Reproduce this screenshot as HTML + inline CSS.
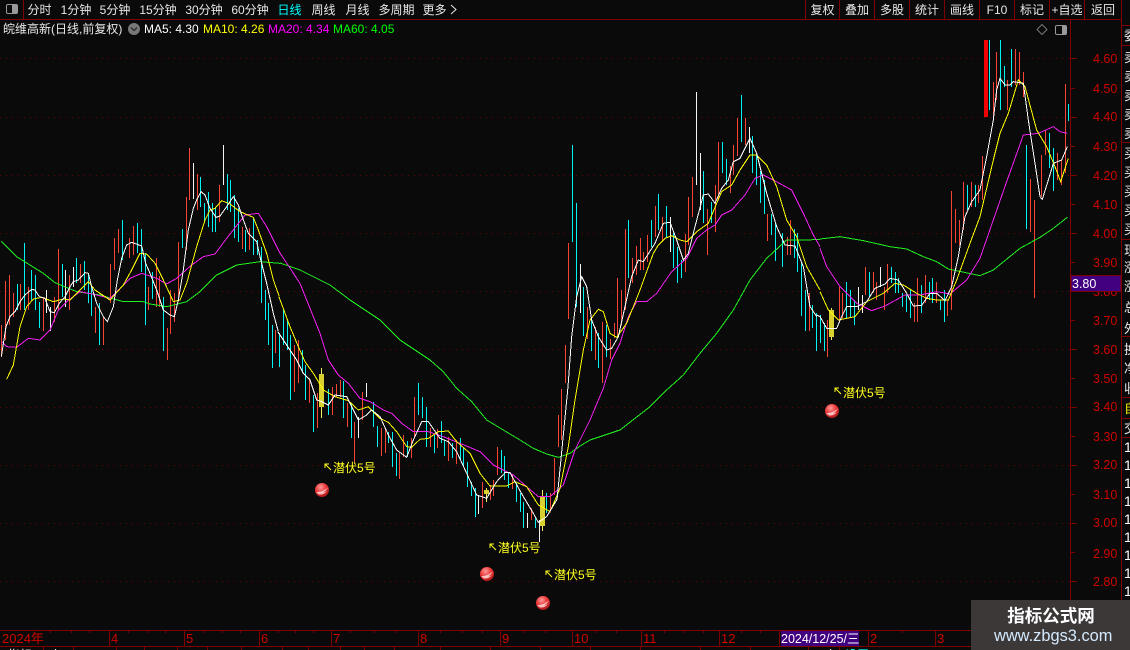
<!DOCTYPE html>
<html><head><meta charset="utf-8"><style>
html,body{margin:0;padding:0;background:#0a0a0a;width:1130px;height:650px;overflow:hidden}
svg{display:block;position:absolute;left:0;top:0}
text{font-family:"Liberation Sans","WenQuanYi Zen Hei","Noto Sans CJK SC",sans-serif;font-size:12px}
.l{fill:none;stroke-width:1;vector-effect:non-scaling-stroke;shape-rendering:crispEdges}
.l polyline{fill:none;vector-effect:non-scaling-stroke}
.t{fill:#e8e8e8;text-anchor:middle}
.y{fill:#d00000;font-size:12.5px}
.x{fill:#d00000;font-size:13px}
.s{fill:#e8e8e8;font-size:13px}
.h{fill:#ffff20;font-size:12px}
</style></head><body>
<svg width="1130" height="650" viewBox="0 0 1130 650" xmlns="http://www.w3.org/2000/svg">
<defs>
<radialGradient id="b" cx="40%" cy="30%" r="75%"><stop offset="0" stop-color="#ff9a9a"/><stop offset=".55" stop-color="#e83030"/><stop offset="1" stop-color="#a01818"/></radialGradient>
<g id="ball"><circle r="7" fill="url(#b)"/><path d="M-6 2 Q0 2.5 6 -2.5 Q4 1 1 2.5 Q3 2.5 5 1 Q2 5 -3 4.5 Z" fill="#ffdada" opacity=".85"/></g>
</defs>
<rect width="1130" height="650" fill="#0a0a0a"/>
<!-- grid -->
<path d="M0 58.5H1070M0 117.5H1070M0 175.5H1070M0 233.5H1070M0 291.5H1070M0 349.5H1070M0 407.5H1070M0 465.5H1070M0 523.5H1070M0 581.5H1070" stroke="#6a0000" stroke-width="1" stroke-dasharray="1 5" fill="none"/>
<!-- candles red -->
<path fill="none" stroke="#f84434" stroke-width="1" d="M1.5 325V357M5.5 281V340M9.5 275V325M13.5 293V317M20.5 284V310M28.5 287V310M43.5 297V331M54.5 297V322M58.5 249V310M69.5 275V310M80.5 264V283M95.5 307V333M103.5 317V345M110.5 264V303M114.5 238V270M118.5 229V253M129.5 238V258M133.5 226V255M148.5 287V310M156.5 258V307M159.5 276V307M167.5 328V360M170.5 290V334M174.5 293V322M178.5 242V297M186.5 197V250M189.5 148V200M197.5 174V210M219.5 185V222M242.5 227V249M249.5 228V250M275.5 330V353
M294.5 345V392M298.5 340V383M309.5 378V403M317.5 393V428M332.5 387V415M336.5 384V397M340.5 380V397M347.5 403V427M354.5 422V463M362.5 392V420M381.5 428V456M385.5 428V453M399.5 453V479M403.5 435V457M411.5 438V458M414.5 397V438M430.5 428V447M437.5 429V448M448.5 437V461M456.5 440V464M482.5 482V508M490.5 485V500M493.5 480V496M497.5 447V475M512.5 475V489M531.5 508V520M550.5 493V510M554.5 458V495M558.5 415V447M561.5 389V440M565.5 345V383
M568.5 243V319M587.5 307V339M595.5 327V360M602.5 322V383M610.5 339V359M614.5 323V338M617.5 278V335M621.5 290V325M625.5 229V310M632.5 258V283M636.5 246V275M640.5 238V270M643.5 252V270M647.5 235V262M655.5 206V237M662.5 217V242M685.5 234V272M688.5 197V245M692.5 177V217M707.5 209V255M715.5 185V232M718.5 142V200M730.5 166V193M733.5 145V175M737.5 118V156M745.5 118V145M767.5 214V241M787.5 237V255M790.5 220V255
M809.5 293V331M827.5 320V357M839.5 287V322M842.5 293V318M865.5 267V295M873.5 272V293M876.5 282V300M884.5 287V310M887.5 264V293M914.5 303V322M917.5 278V322M925.5 275V303M936.5 282V303M947.5 300V316M951.5 191V310M955.5 209V243M959.5 220V245M963.5 182V230M971.5 182V207M978.5 185V203M982.5 156V200M993.5 82V117M996.5 52V100M1007.5 80V110M1015.5 49V85M1019.5 52V85M1023.5 72V97M1030.5 179V232M1034.5 200V298M1041.5 155V197M1045.5 130V155M1057.5 153V180M1061.5 160V185M1065.5 84V173"/>
<!-- candles cyan -->
<path fill="none" stroke="#00f4f4" stroke-width="1" d="M17.5 284V310M24.5 243V310M31.5 270V300M35.5 275V310M39.5 302V328M62.5 264V297M76.5 258V283M84.5 261V290M88.5 273V303M91.5 287V316M99.5 303V345M122.5 220V260M137.5 223V253M141.5 229V272M145.5 253V325M152.5 272V299M163.5 297V351M182.5 229V248M200.5 177V207M204.5 203V223M208.5 192V227M212.5 203V232M215.5 207V232M227.5 174V210M230.5 180V212M234.5 195V238M238.5 208V242M245.5 230V252M253.5 217V255M257.5 240V255M261.5 247V303M265.5 290V320M268.5 303V345M272.5 325V368M279.5 333V367
M283.5 310V345M287.5 320V350M290.5 335V400M302.5 350V373M305.5 365V400M313.5 395V432M328.5 389V415M343.5 381V418M351.5 403V438M373.5 402V427M377.5 426V447M388.5 432V443M392.5 432V467M396.5 453V476M407.5 441V457M418.5 383V415M422.5 397V418M426.5 407V447M434.5 435V453M441.5 421V443M444.5 440V456M452.5 443V458M460.5 438V460M463.5 448V467M467.5 462V487M471.5 482V496M475.5 488V517M501.5 450V473M504.5 456V480M508.5 473V488M516.5 483V502M520.5 493V512M523.5 502V528M535.5 517V528M546.5 493V513
M572.5 145V242M576.5 203V307M583.5 287V336M591.5 317V351M598.5 333V368M606.5 325V357M628.5 220V278M651.5 220V247M658.5 194V230M666.5 206V238M673.5 233V268M677.5 247V283M681.5 260V278M703.5 171V223M711.5 202V223M722.5 142V173M726.5 159V185M741.5 95V142M752.5 136V173M756.5 153V185M760.5 171V203M764.5 180V214M771.5 214V235M775.5 223V261M782.5 233V267M794.5 229V258M797.5 233V272
M801.5 263V316M805.5 290V331M812.5 305V328M816.5 313V351M820.5 315V343M824.5 323V351M846.5 282V319M850.5 290V317M854.5 300V325M869.5 272V297M891.5 267V283M895.5 272V293M898.5 278V293M902.5 293V307M906.5 295V312M910.5 290V318M921.5 285V313M929.5 282V300M932.5 278V303M940.5 300V310M944.5 290V322M967.5 185V210M975.5 185V207M989.5 40V110M1000.5 40V110M1004.5 66V87M1011.5 49V87M1026.5 145V229M1049.5 133V168M1053.5 148V191M1068.5 104V121"/>
<!-- candles white -->
<path fill="none" stroke="#f4f4f4" stroke-width="1" d="M46.5 290V313M50.5 307V331M65.5 270V307M73.5 267V287M193.5 163V199M223.5 145V185M358.5 417V438M366.5 383V397M478.5 495V514M527.5 513V528M539.5 520V542M580.5 264V313M670.5 217V252M696.5 92V185M700.5 153V210M749.5 127V153M858.5 287V310M862.5 295V313M880.5 267V287"/>
<!-- thick red -->
<rect x="984" y="40" width="4" height="77" fill="#f00000"/>
<!-- yellow signal candles -->
<path fill="none" stroke="#f4f060" stroke-width="1" d="M321.5 368V418M486.5 488V502M542.5 490V531M831.5 308V340"/>
<g fill="#d8d030"><rect x="319" y="374" width="5" height="33"/><rect x="484" y="490" width="5" height="4"/><rect x="540" y="496" width="5" height="30"/><rect x="829" y="310" width="5" height="27"/></g>
<!-- MA60 green -->
<g class="l" stroke="#20f020">
<polyline transform="translate(0,140) scale(.33333)" points="4,304 25,325 50,350 85,372 130,400 165,428 230,455 300,465 370,485 430,485 450,492 500,500 560,485 600,455 650,405 710,375 780,365 840,370"/>
<polyline transform="translate(280,360) scale(.33333)" points="0,-291 60,-270 150,-225 210,-180 300,-120 360,-60 450,0 490,35 530,85 575,125 620,180 670,210 720,240 760,265 800,282 835,292 870,280 900,258"/>
<polyline transform="translate(540,90) scale(.33333)" points="120,1068 150,1050 240,1020 330,950 380,900 430,855 480,790 530,730 580,660 630,570 680,505 740,450 800,450 840,448"/>
<polyline transform="translate(780,30) scale(.33333)" points="120,627 180,620 250,632 330,650 380,657 430,680 470,695 505,717 600,737 640,720 720,655 780,622 820,595 862,562"/>
</g>
<!-- MA20 magenta -->
<g class="l" stroke="#f020f0">
<polyline transform="translate(0,140) scale(.33333)" points="5,605 20,620 50,622 85,595 120,600 150,570 175,510 200,485 240,455 290,465 330,475 365,440 390,415 425,400 470,415 500,432 530,415 575,375 610,350 645,342 680,295 735,225 775,220 800,260 840,340"/>
<polyline transform="translate(280,360) scale(.33333)" points="0,-321 60,-230 120,-80 145,0 175,45 205,70 240,115 270,125 310,150 335,160 365,190 400,215 445,215 490,230 540,250 600,275 640,315 700,345 740,380 775,410 810,410 850,375 885,270 900,240"/>
<polyline transform="translate(540,90) scale(.33333)" points="120,1050 150,990 190,895 215,810 240,760 265,680 290,635 320,635 350,610 395,545 440,505 470,445 500,420 525,405 545,375 575,360 615,315 645,265 670,255 700,270 755,300 790,370 820,435 840,470"/>
<polyline transform="translate(780,30) scale(.33333)" points="120,655 140,710 180,770 230,820 275,842 315,828 375,795 420,795 470,785 510,792 560,750 600,685 640,570 680,455 730,315 775,310 820,290 840,305 862,310"/>
</g>
<!-- MA10 yellow -->
<g class="l" stroke="#ffff00">
<polyline transform="translate(0,140) scale(.33333)" points="20,718 40,675 60,560 80,500 100,477 125,472 160,485 190,477 210,480 240,450 265,425 285,450 330,480 370,435 395,390 420,340 440,342 465,370 490,420 520,485 540,480 560,430 590,320 615,240 630,210 645,205 665,182 690,192 720,215 760,232 775,270 800,340 820,420 838,470"/>
<polyline transform="translate(280,360) scale(.33333)" points="-3,-189 30,-100 55,-40 75,5 100,40 130,90 165,110 205,122 235,150 265,140 300,175 325,187 350,215 380,260 395,262 420,238 445,235 475,215 505,213 530,245 570,280 600,340 630,378 680,378 705,365 740,380 775,435 810,455 840,385 865,260 885,120"/>
<polyline transform="translate(540,90) scale(.33333)" points="105,930 130,780 150,690 175,658 190,665 210,730 230,742 260,700 300,600 340,490 355,465 375,445 395,437 420,450 440,455 470,425 505,400 530,340 545,305 575,285 600,240 630,195 650,195 680,225 710,290 740,390 770,440 800,530 840,600"/>
<polyline transform="translate(780,30) scale(.33333)" points="120,785 145,840 175,870 225,860 260,815 310,790 345,760 370,765 410,790 440,805 470,810 505,810 530,750 570,640 600,560 640,390 660,310 685,250 715,150 735,170 770,300 800,350 825,410 842,455 865,385"/>
</g>
<!-- MA5 white -->
<g class="l" stroke="#ffffff">
<polyline transform="translate(0,140) scale(.33333)" points="4,650 18,560 30,530 45,515 60,485 75,465 95,448 105,450 118,470 135,475 150,515 163,518 178,490 195,470 210,440 220,425 235,420 255,398 265,400 275,440 290,490 310,530 322,545 340,500 352,420 365,355 380,315 395,307 425,318 437,370 450,400 470,450 490,510 510,525 523,530 535,480 550,390 565,270 580,205 590,180 603,155 615,165 630,205 648,232 660,228 680,200 700,170 715,195 730,240 745,280 770,305 780,350 800,430 820,520 835,575"/>
<polyline transform="translate(280,360) scale(.33333)" points="-6,-84 50,0 70,40 90,60 110,120 125,125 145,135 165,105 200,110 235,180 260,165 275,150 300,170 325,225 350,270 380,292 400,240 425,185 445,185 480,235 505,245 530,275 560,340 590,405 620,415 650,365 675,338 690,338 730,410 760,460 775,487 800,470 830,420"/>
<polyline transform="translate(540,90) scale(.33333)" points="51,1230 84,890 95,740 110,620 125,560 140,590 155,690 175,740 200,780 215,775 235,740 255,650 275,560 295,510 310,515 345,460 370,400 390,397 410,450 430,510 445,490 465,410 490,315 505,312 525,340 545,295 565,270 580,215 600,205 630,145 650,190 680,310 710,410 735,465 765,468 790,530 810,650 830,680"/>
<polyline transform="translate(780,30) scale(.33333)" points="110,855 120,860 140,895 170,895 185,860 200,830 230,830 260,815 285,775 315,762 330,745 355,750 380,790 400,828 425,826 450,790 470,790 495,812 515,770 535,680 555,560 575,515 600,480 620,380 640,270 650,180 660,145 675,165 690,165 700,155 730,160 745,270 765,400 780,500 787,508 805,450 820,400 845,390 862,350"/>
</g>
<!-- signals -->
<use href="#ball" x="322" y="490"/><use href="#ball" x="487" y="574"/><use href="#ball" x="543" y="603"/><use href="#ball" x="832" y="411"/>
<g stroke="#ffff20" fill="none" stroke-width="1"><path d="M331 470L325.5 464.5M325 468V464H329"/><path d="M496 550L490.5 544.5M490 548V544H494"/><path d="M552 577L546.5 571.5M546 575V571H550"/><path d="M841 394L835.5 388.5M835 392V388H839"/></g>
<text class="h" x="333" y="472">潜伏5号</text>
<text class="h" x="498" y="552">潜伏5号</text>
<text class="h" x="554" y="579">潜伏5号</text>
<text class="h" x="843" y="397">潜伏5号</text>
<!-- top bar -->
<rect width="1130" height="19" fill="#0a0a0a"/>
<path d="M0 19.5H1122M23.5 0V19M805.5 0V19M839.5 0V19M874.5 0V19M909.5 0V19M944.5 0V19M979.5 0V19M1014.5 0V19M1049.5 0V19M1084.5 0V19M1121.5 0V650M1070.5 20V630" stroke="#800000" stroke-width="1" fill="none"/>
<g fill="none" stroke="#999"><rect x="6.5" y="4.5" width="11" height="9" rx="1.5"/></g><rect x="12" y="5" width="5" height="8" fill="#999"/>
<g class="t">
<text x="39.5" y="14" class="t">分时</text><text x="76" y="14" class="t">1分钟</text><text x="115" y="14" class="t">5分钟</text><text x="158" y="14" class="t">15分钟</text><text x="204" y="14" class="t">30分钟</text><text x="250" y="14" class="t">60分钟</text>
<text x="289.5" y="14" class="t" style="fill:#00ffff">日线</text><text x="323.5" y="14" class="t">周线</text><text x="357.5" y="14" class="t">月线</text><text x="396.5" y="14" class="t">多周期</text><text x="434.5" y="14" class="t">更多</text>
<text x="822.5" y="14" class="t">复权</text><text x="857" y="14" class="t">叠加</text><text x="892" y="14" class="t">多股</text><text x="927" y="14" class="t">统计</text><text x="962" y="14" class="t">画线</text><text x="997" y="14" class="t">F10</text><text x="1032" y="14" class="t">标记</text><text x="1067" y="14" class="t">+自选</text><text x="1103" y="14" class="t">返回</text>
</g>
<path d="M451 5L456 9.5L451 14" stroke="#e8e8e8" fill="none"/>
<!-- info line -->
<text x="3" y="33" fill="#e8e8e8">皖维高新(日线,前复权)</text>
<circle cx="134" cy="29" r="6" fill="#777"/><path d="M131 27.5L134 30.5L137 27.5" stroke="#222" fill="none" stroke-width="1.2"/>
<text x="144" y="33" fill="#fff">MA5: 4.30</text>
<text x="203" y="33" fill="#ffff00">MA10: 4.26</text>
<text x="268" y="33" fill="#ff00ff">MA20: 4.34</text>
<text x="333" y="33" fill="#00ff00">MA60: 4.05</text>
<path d="M1042 24.5L1047 29.5L1042 34.5L1037 29.5Z" stroke="#777" fill="none"/>
<rect x="1055.5" y="25.5" width="11" height="9" rx="1.5" stroke="#999" fill="none"/><rect x="1062" y="26" width="4" height="8" fill="#999"/>
<!-- y axis -->
<path stroke="#800000" fill="none" d="M1071 58.5H1077M1071 88.5H1075M1071 117.5H1077M1071 146.5H1075M1071 175.5H1077M1071 204.5H1075M1071 233.5H1077M1071 262.5H1075M1071 291.5H1077M1071 320.5H1075M1071 349.5H1077M1071 378.5H1075M1071 407.5H1077M1071 436.5H1075M1071 465.5H1077M1071 494.5H1075M1071 523.5H1077M1071 552.5H1075M1071 581.5H1077"/>
<g class="y">
<text class="y" x="1093" y="63">4.60</text><text class="y" x="1093" y="93">4.50</text><text class="y" x="1093" y="121">4.40</text><text class="y" x="1093" y="151">4.30</text><text class="y" x="1093" y="180">4.20</text><text class="y" x="1093" y="209">4.10</text><text class="y" x="1093" y="238">4.00</text><text class="y" x="1093" y="267">3.90</text><text class="y" x="1093" y="296">3.80</text><text class="y" x="1093" y="325">3.70</text><text class="y" x="1093" y="354">3.60</text><text class="y" x="1093" y="383">3.50</text><text class="y" x="1093" y="411">3.40</text><text class="y" x="1093" y="441">3.30</text><text class="y" x="1093" y="469">3.20</text><text class="y" x="1093" y="499">3.10</text><text class="y" x="1093" y="527">3.00</text><text class="y" x="1093" y="558">2.90</text><text class="y" x="1093" y="586">2.80</text>
</g>
<rect x="1071" y="275.5" width="50" height="16" fill="#400080" stroke="#800000"/>
<text x="1072" y="288" fill="#fff" style="font-size:12.5px">3.80</text>
<!-- sidebar -->
<path stroke="#800000" fill="none" d="M1122 25.5H1130M1122 45.5H1130M1122 142.5H1130M1122 239.5H1130M1122 336.5H1130M1122 397.5H1130M1122 418.5H1130M1122 437.5H1130"/>
<g>
<text class="s" x="1124" y="40">委</text>
<text class="s" x="1124" y="62">卖</text><text class="s" x="1124" y="81">卖</text><text class="s" x="1124" y="100">卖</text><text class="s" x="1124" y="119">卖</text><text class="s" x="1124" y="138">卖</text>
<text class="s" x="1124" y="158">买</text><text class="s" x="1124" y="177">买</text><text class="s" x="1124" y="196">买</text><text class="s" x="1124" y="215">买</text><text class="s" x="1124" y="234">买</text>
<text class="s" x="1124" y="255">现</text><text class="s" x="1124" y="272">涨</text><text class="s" x="1124" y="291">涨</text><text class="s" x="1124" y="312">总</text><text class="s" x="1124" y="333">外</text>
<text class="s" x="1124" y="354">换</text><text class="s" x="1124" y="373">净</text><text class="s" x="1124" y="393">收</text>
<text class="s" x="1124" y="413" style="fill:#e8e800">自</text><text class="s" x="1124" y="433">交</text>
<text x="1124" y="452" fill="#fff" style="font-size:14px">1</text><text x="1124" y="470" fill="#fff" style="font-size:14px">1</text><text x="1124" y="488" fill="#fff" style="font-size:14px">1</text><text x="1124" y="506" fill="#fff" style="font-size:14px">1</text><text x="1124" y="524" fill="#fff" style="font-size:14px">1</text><text x="1124" y="542" fill="#fff" style="font-size:14px">1</text><text x="1124" y="560" fill="#fff" style="font-size:14px">1</text><text x="1124" y="578" fill="#fff" style="font-size:14px">1</text><text x="1124" y="596" fill="#fff" style="font-size:14px">1</text>
</g>
<!-- bottom axis -->
<path stroke="#800000" fill="none" d="M0 630.5H1070M0 646.5H1130M109.5 631V646M184.5 631V646M259.5 631V646M331.5 631V646M418.5 631V646M500.5 631V646M572.5 631V646M641.5 631V646M719.5 631V646M779.5 631V646M868.5 631V646M935.5 631V646
M50.5 631V633M71.5 631V633M89.5 631V633M128.5 631V633M148.5 631V633M165.5 631V633M203.5 631V633M222.5 631V633M240.5 631V633M278.5 631V633M295.5 631V633M313.5 631V633M350.5 631V633M374.5 631V633M396.5 631V633M440.5 631V633M462.5 631V633M482.5 631V633M523.5 631V633M545.5 631V633M595.5 631V633M616.5 631V633M664.5 631V633M684.5 631V633M703.5 631V633M741.5 631V633M760.5 631V633M902.5 631V633
M43.5 647V650M73.5 647V650M116.5 647V650M144.5 647V650M177.5 647V650M207.5 647V650M241.5 647V650M282.5 647V650M308.5 647V650M340.5 647V650M364.5 647V650M394.5 647V650M440.5 647V650M490.5 647V650M540.5 647V650M590.5 647V650M640.5 647V650M700.5 647V650M750.5 647V650M808.5 647V650M839.5 647V650"/>
<g class="x">
<text class="x" x="2" y="643">2024年</text><text class="x" x="111" y="643">4</text><text class="x" x="186" y="643">5</text><text class="x" x="261" y="643">6</text><text class="x" x="333" y="643">7</text><text class="x" x="420" y="643">8</text><text class="x" x="502" y="643">9</text><text class="x" x="574" y="643">10</text><text class="x" x="643" y="643">11</text><text class="x" x="721" y="643">12</text><text class="x" x="870" y="643">2</text><text class="x" x="937" y="643">3</text>
</g>
<rect x="781" y="631" width="78" height="15" fill="#400080"/>
<text x="781" y="643" fill="#fff" style="font-size:12.5px">2024/12/25/三</text>
<text x="8" y="659" fill="#fff">指标</text><text x="50" y="659" fill="#fff">上</text><text x="825" y="659" fill="#fff">上</text><text x="845" y="659" fill="#00ffff">设置</text>
<!-- watermark -->
<rect x="971" y="600" width="159" height="50" fill="#3c3838"/>
<text x="1051" y="622" text-anchor="middle" fill="#fff" style="font-size:17.5px;font-weight:bold">指标公式网</text>
<text x="994" y="641" fill="#d4eaff" style="font-size:16.4px">www.zbgs3.com</text>
</svg>
</body></html>
